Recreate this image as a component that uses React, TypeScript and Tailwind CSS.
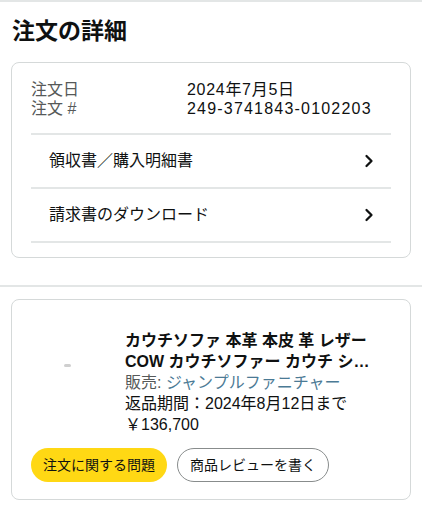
import { ChevronRight } from "lucide-react";

const font = { fontFamily: '"Liberation Sans", "Noto Sans CJK JP", sans-serif' };

export default function App() {
  return (
    <div className="w-[422px] h-[512px] overflow-hidden bg-white text-[#0f1111] border-t-2 border-[#e3e6e6]" style={font}>
      {/* Heading */}
      <h1 className="px-3 pt-[12px] text-[23px] leading-[34px] font-bold">注文の詳細</h1>

      {/* Order info card */}
      <div className="mx-[11px] mt-[14px] rounded-lg border border-[#d5d9d9] px-[19px] pt-[17px]">
        <div className="grid grid-cols-[156px_1fr] text-[16px] leading-[19px]">
          <span className="text-[#565959]">注文日</span>
          <span className="tracking-[0.7px]">2024年7月5日</span>
          <span className="text-[#565959]">注文 #</span>
          <span className="tracking-[1.2px]">249-3741843-0102203</span>
        </div>
        <div className="mt-[15px] border-t-2 border-[#e3e6e6]">
          <div className="flex items-center justify-between h-[54px] pl-[18px] pr-[12px] border-b-2 border-[#e3e6e6]">
            <span className="text-[16px]">領収書／購入明細書</span>
            <ChevronRight size={20} strokeWidth={2.75} />
          </div>
          <div className="flex items-center justify-between h-[54px] pl-[18px] pr-[12px] border-b-2 border-[#e3e6e6]">
            <span className="text-[16px]">請求書のダウンロード</span>
            <ChevronRight size={20} strokeWidth={2.75} />
          </div>
        </div>
        <div className="h-[14px]" />
      </div>

      {/* Section separator */}
      <div className="mt-[27px] h-[2px] bg-[#e3e6e6]" />

      {/* Item card */}
      <div className="mx-[11px] mt-[12px] rounded-lg border border-[#d5d9d9] px-[19px] pt-[30px] pb-[17px]">
        <div className="flex">
          <div className="w-[94px] shrink-0 pl-[33px] pt-[34px]">
            <div className="w-[7px] h-[3px] rounded-sm bg-[#cfcfcf]" />
          </div>
          <div className="flex-1 min-w-0 text-[16px] leading-[21px]">
            <p className="font-bold line-clamp-2 pr-[10px]">
              カウチソファ 本革 本皮 革 レザー COW カウチソファー カウチ シングル 2人掛け 3人掛け
            </p>
            <p>
              <span className="text-[#565959]">販売: </span>
              <span className="text-[#4b7a95]">ジャンプルファニチャー</span>
            </p>
            <p>返品期間：2024年8月12日まで</p>
            <p>￥136,700</p>
          </div>
        </div>
        <div className="mt-[13px] flex gap-[10px]">
          <button className="h-[34px] px-[12px] rounded-full bg-[#ffd814] text-[14px] text-[#0f1111]">
            注文に関する問題
          </button>
          <button className="h-[34px] px-[12px] rounded-full border border-[#888c8c] bg-white text-[14px] text-[#0f1111]">
            商品レビューを書く
          </button>
        </div>
      </div>
    </div>
  );
}
